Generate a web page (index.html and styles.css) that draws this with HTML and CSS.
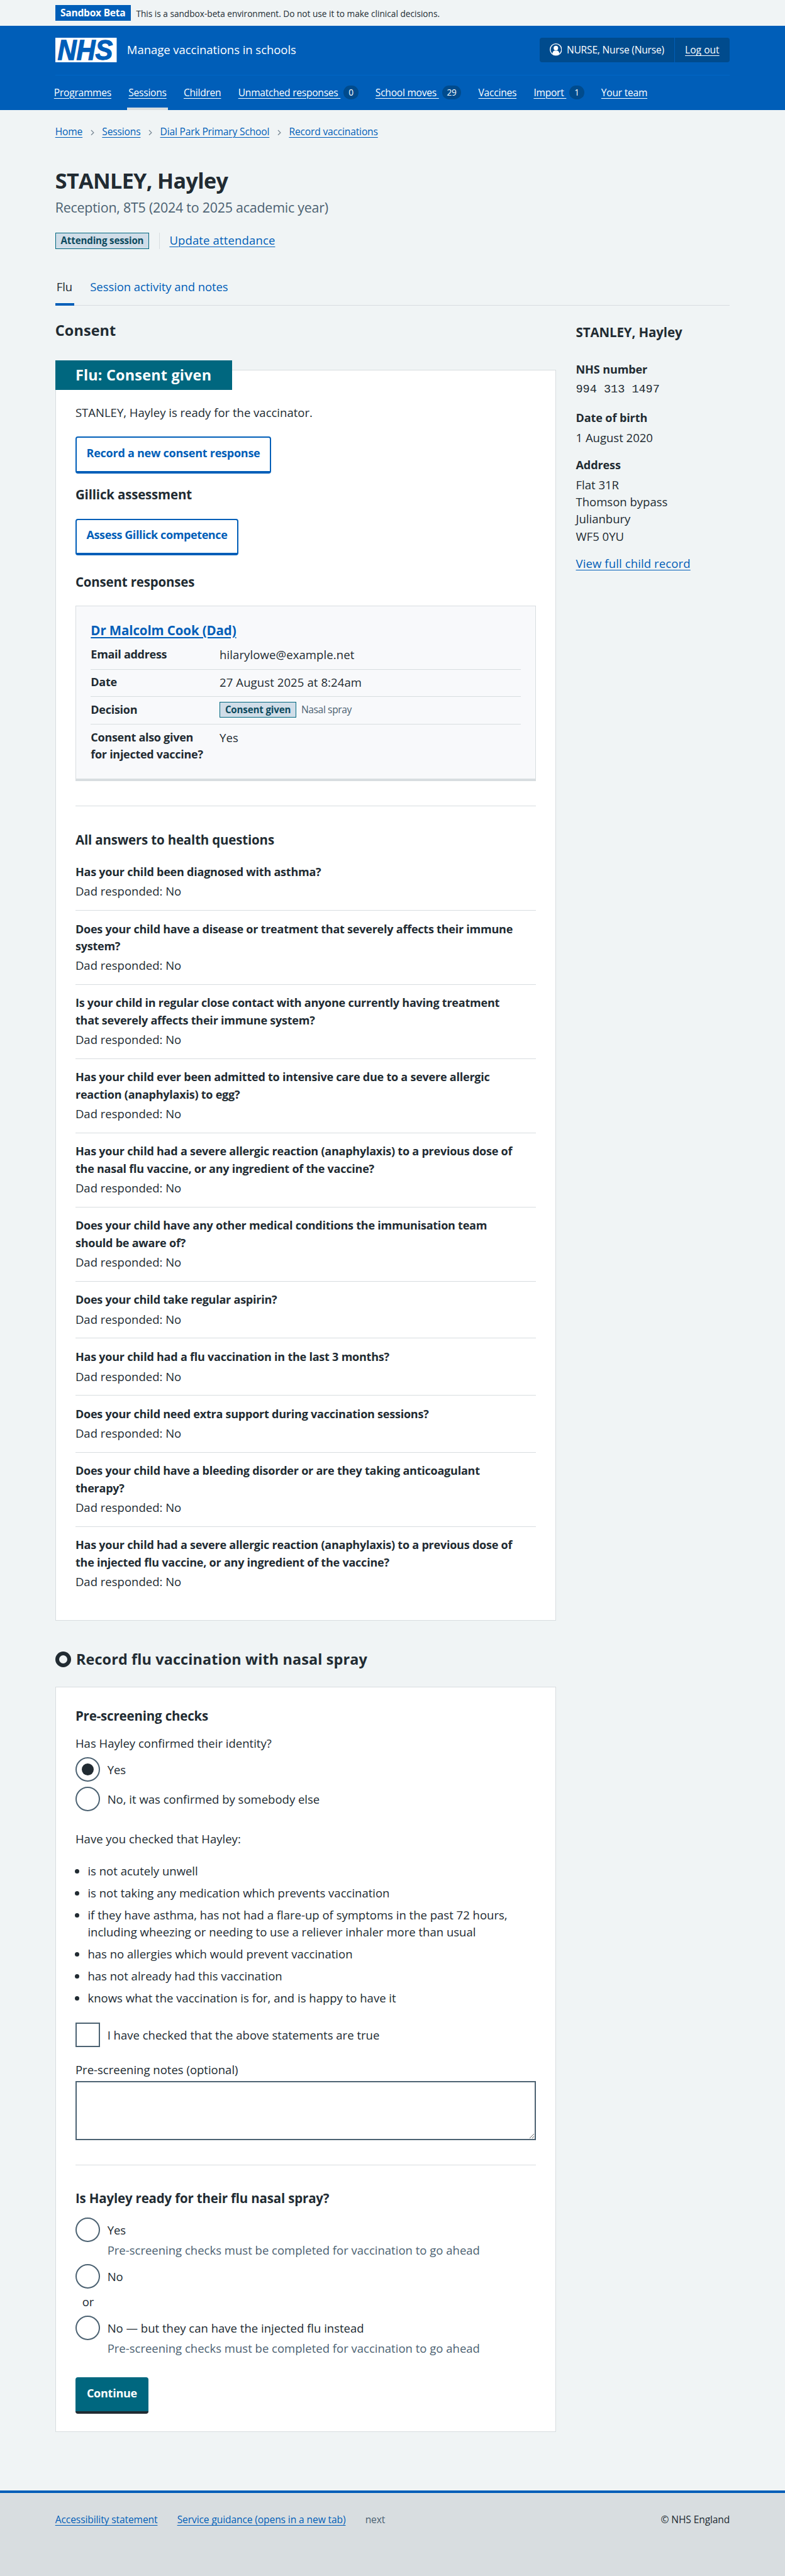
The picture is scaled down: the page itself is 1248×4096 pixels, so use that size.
FILE: index.html
```html
<!DOCTYPE html>
<html lang="en">
<head>
<meta charset="utf-8">
<title>STANLEY, Hayley – Manage vaccinations in schools</title>
<link rel="stylesheet" href="styles.css">
</head>
<body>
<div class="environment">
  <div class="container environment-inner">
    <strong class="environment-tag">Sandbox Beta</strong>
    <span class="environment-text">This is a sandbox-beta environment. Do not use it to make clinical decisions.</span>
  </div>
</div>

<header class="header">
  <div class="container">
    <div class="header-top">
      <svg class="logo" viewBox="0 0 100 40" role="img" aria-label="NHS">
        <rect width="100" height="40" fill="#fff"/>
        <text class="logo-text" x="3.5" y="36" textLength="90" lengthAdjust="spacingAndGlyphs">NHS</text>
      </svg>
      <span class="service-name">Manage vaccinations in schools</span>
      <div class="account">
        <span class="account-user">
          <svg class="account-icon" viewBox="0 0 20 20" aria-hidden="true">
            <circle cx="10" cy="10" r="9.3" fill="none" stroke="#fff" stroke-width="1.4"/>
            <circle cx="10" cy="7.6" r="3.7" fill="#fff"/>
            <path d="M4.4 16.6c0-3.4 1.8-4.9 4-4.9h3.200c2.200 0 4 1.500 4 4.900C14 18.300 12.100 19 10 19s-4-.7-5.600-2.400z" fill="#fff"/>
          </svg>
          <span class="account-name">NURSE, Nurse (Nurse)</span>
        </span>
        <a class="account-logout" href="#">Log out</a>
      </div>
    </div>
    <nav class="nav">
      <a class="nav-item" href="#"><u>Programmes</u></a>
      <a class="nav-item nav-item-active" href="#"><u>Sessions</u></a>
      <a class="nav-item" href="#"><u>Children</u></a>
      <a class="nav-item" href="#"><u>Unmatched responses&nbsp;</u><span class="count">0</span></a>
      <a class="nav-item" href="#"><u>School moves&nbsp;</u><span class="count">29</span></a>
      <a class="nav-item" href="#"><u>Vaccines</u></a>
      <a class="nav-item" href="#"><u>Import&nbsp;</u><span class="count">1</span></a>
      <a class="nav-item" href="#"><u>Your team</u></a>
    </nav>
  </div>
</header>

<div class="container main">
  <nav class="breadcrumb">
    <a href="#">Home</a>
    <svg class="chevron" viewBox="0 0 6 10"><path d="M1 1l4 4-4 4"/></svg>
    <a href="#">Sessions</a>
    <svg class="chevron" viewBox="0 0 6 10"><path d="M1 1l4 4-4 4"/></svg>
    <a href="#">Dial Park Primary School</a>
    <svg class="chevron" viewBox="0 0 6 10"><path d="M1 1l4 4-4 4"/></svg>
    <a href="#">Record vaccinations</a>
  </nav>

  <h1 class="title">STANLEY, Hayley</h1>
  <p class="caption">Reception, 8T5 (2024 to 2025 academic year)</p>

  <div class="status-bar">
    <strong class="tag">Attending session</strong>
    <span class="status-action"><a href="#">Update attendance</a></span>
  </div>

  <nav class="tabs">
    <a class="tab tab-active" href="#">Flu</a>
    <a class="tab tab-link" href="#">Session activity and notes</a>
  </nav>

  <div class="columns">
    <main class="primary">
      <h2 class="section-heading">Consent</h2>
      <section class="card consent-card">
        <h2 class="card-label">Flu: Consent given</h2>
        <p class="lead">STANLEY, Hayley is ready for the vaccinator.</p>
        <a class="button button-outline" href="#">Record a new consent response</a>
        <h3 class="subheading after-button">Gillick assessment</h3>
        <a class="button button-outline button-gillick" href="#">Assess Gillick competence</a>
        <h3 class="subheading before-response">Consent responses</h3>

        <div class="response">
          <h4 class="response-name"><a href="#">Dr Malcolm Cook (Dad)</a></h4>
          <dl class="summary">
            <div class="summary-row"><dt>Email address</dt><dd>hilarylowe@example.net</dd></div>
            <div class="summary-row"><dt>Date</dt><dd>27 August 2025 at 8:24am</dd></div>
            <div class="summary-row"><dt>Decision</dt><dd class="decision"><strong class="tag">Consent given</strong><span class="method">Nasal spray</span></dd></div>
            <div class="summary-row"><dt>Consent also given<br>for injected vaccine?</dt><dd>Yes</dd></div>
          </dl>
        </div>

        <hr class="rule">
        <h3 class="subheading after-rule">All answers to health questions</h3>
        <dl class="answers">
          <div class="answer"><dt>Has your child been diagnosed with asthma?</dt><dd>Dad responded: No</dd></div>
          <div class="answer"><dt>Does your child have a disease or treatment that severely affects their immune<br>system?</dt><dd>Dad responded: No</dd></div>
          <div class="answer"><dt>Is your child in regular close contact with anyone currently having treatment<br>that severely affects their immune system?</dt><dd>Dad responded: No</dd></div>
          <div class="answer"><dt>Has your child ever been admitted to intensive care due to a severe allergic<br>reaction (anaphylaxis) to egg?</dt><dd>Dad responded: No</dd></div>
          <div class="answer"><dt>Has your child had a severe allergic reaction (anaphylaxis) to a previous dose of<br>the nasal flu vaccine, or any ingredient of the vaccine?</dt><dd>Dad responded: No</dd></div>
          <div class="answer"><dt>Does your child have any other medical conditions the immunisation team<br>should be aware of?</dt><dd>Dad responded: No</dd></div>
          <div class="answer"><dt>Does your child take regular aspirin?</dt><dd>Dad responded: No</dd></div>
          <div class="answer"><dt>Has your child had a flu vaccination in the last 3 months?</dt><dd>Dad responded: No</dd></div>
          <div class="answer"><dt>Does your child need extra support during vaccination sessions?</dt><dd>Dad responded: No</dd></div>
          <div class="answer"><dt>Does your child have a bleeding disorder or are they taking anticoagulant<br>therapy?</dt><dd>Dad responded: No</dd></div>
          <div class="answer"><dt>Has your child had a severe allergic reaction (anaphylaxis) to a previous dose of<br>the injected flu vaccine, or any ingredient of the vaccine?</dt><dd>Dad responded: No</dd></div>
        </dl>
      </section>

      <h2 class="section-heading record-heading"><span class="ring"></span>Record flu vaccination with nasal spray</h2>
      <section class="card record-card">
        <h3 class="subheading">Pre-screening checks</h3>
        <p class="question">Has Hayley confirmed their identity?</p>
        <label class="choice"><span class="radio radio-checked"></span>Yes</label>
        <label class="choice choice-next"><span class="radio"></span>No, it was confirmed by somebody else</label>
        <p class="checked-intro">Have you checked that Hayley:</p>
        <ul class="checks">
          <li>is not acutely unwell</li>
          <li>is not taking any medication which prevents vaccination</li>
          <li>if they have asthma, has not had a flare-up of symptoms in the past 72 hours,<br>including wheezing or needing to use a reliever inhaler more than usual</li>
          <li>has no allergies which would prevent vaccination</li>
          <li>has not already had this vaccination</li>
          <li>knows what the vaccination is for, and is happy to have it</li>
        </ul>
        <label class="choice choice-confirm"><span class="checkbox"></span>I have checked that the above statements are true</label>
        <label class="notes-label" for="notes">Pre-screening notes (optional)</label>
        <textarea class="notes" id="notes"></textarea>
        <hr class="rule">
        <h3 class="subheading after-rule">Is Hayley ready for their flu nasal spray?</h3>
        <label class="choice choice-first"><span class="radio"></span>Yes</label>
        <p class="hint">Pre-screening checks must be completed for vaccination to go ahead</p>
        <label class="choice"><span class="radio"></span>No</label>
        <p class="or">or</p>
        <label class="choice"><span class="radio"></span>No — but they can have the injected flu instead</label>
        <p class="hint">Pre-screening checks must be completed for vaccination to go ahead</p>
        <a class="button button-primary" href="#">Continue</a>
      </section>
    </main>

    <aside class="sidebar">
      <h2 class="sidebar-heading">STANLEY, Hayley</h2>
      <dl class="details">
        <dt>NHS number</dt><dd class="nhs-number">994 313 1497</dd>
        <dt>Date of birth</dt><dd>1 August 2020</dd>
        <dt>Address</dt><dd>Flat 31R<br>Thomson bypass<br>Julianbury<br>WF5 0YU</dd>
      </dl>
      <a class="record-link" href="#">View full child record</a>
    </aside>
  </div>
</div>

<footer class="footer">
  <div class="container footer-inner">
    <a href="#">Accessibility statement</a>
    <a href="#">Service guidance (opens in a new tab)</a>
    <span class="footer-build">next</span>
    <span class="copyright">© NHS England</span>
  </div>
</footer>
</body>
</html>
```
FILE: styles.css
```css
* { box-sizing: border-box; }

html { background: #d8dde0; overflow: hidden; }

body {
  zoom: 0.975;
  margin: 0;
  background: #f0f4f5;
  color: #212b32;
  font: 460 19px/28px "Open Sans", "Noto Sans", sans-serif;
}

h1, h2, h3, h4, p, dl, dd, ul { margin: 0; padding: 0; }

a { color: #005eb8; text-decoration-thickness: 1px; text-underline-offset: 3px; }

.container { width: 1100px; margin: 0 auto; }

/* Environment banner */
.environment-inner { display: flex; align-items: center; height: 42px; gap: 9px; font-size: 14px; }
.environment-tag { height: 26px; width: 123px; text-align: center; line-height: 26px; font-size: 16px; letter-spacing: -0.25px; background: #005eb8; color: #fff; white-space: nowrap; }
.environment-text { padding-top: 2px; white-space: nowrap; }

/* Header */
.header { height: 137px; background: #005eb8; color: #fff; }
.header a { color: #fff; }
.header-top { display: flex; align-items: center; height: 81px; padding: 20px 0; border-bottom: 1px solid #0066c6; }
.logo { width: 100px; height: 40px; overflow: visible; }
.logo-text { font: italic bold 45px "Liberation Sans", Arial, sans-serif; fill: #005eb8; stroke: #005eb8; stroke-width: 1.3px; }
.service-name { margin: -2px auto 0 17px; letter-spacing: -0.05px; }
.account { display: flex; width: 310px; height: 40px; background: #004b8d; border-radius: 4px; font-size: 16px; line-height: 40px; }
.account-user { display: flex; align-items: center; width: 220px; padding-left: 16px; border-right: 1px solid #005eb8; }
.account-icon { width: 20px; height: 20px; margin: -2px 8px 0 0; }
.account-name { letter-spacing: -0.2px; white-space: nowrap; }
.account-logout { flex: 1; text-align: center; }
.nav { display: flex; gap: 24px; height: 56px; margin-left: -4px; font-size: 16px; letter-spacing: -0.26px; }
.nav-item { display: flex; align-items: center; padding: 0 2px; border-bottom: 4.15px solid transparent; border-top: 4.15px solid transparent; text-decoration: none; white-space: nowrap; }
.nav-item u { text-decoration-thickness: 1px; text-underline-offset: 3px; }
.nav-item-active { border-bottom-color: #d8dde0; }
.count { min-width: 24px; height: 22px; margin-left: 5px; padding: 0 8px; border-radius: 11px; background: #004b8d; font-size: 14px; line-height: 23px; text-align: center; }

/* Page heading */
.main { height: 3883px; padding-top: 24px; }
.breadcrumb { display: flex; align-items: center; height: 24px; font-size: 16px; line-height: 24px; letter-spacing: -0.18px; }
.chevron { width: 6px; height: 10px; margin: 2px 13px 0; fill: none; stroke: #768692; stroke-width: 1.3; }
.title { margin-top: 45.4px; font-size: 35px; line-height: 44px; letter-spacing: -0.65px; }
.caption { margin-top: 6px; font-size: 22px; line-height: 32px; letter-spacing: -0.25px; color: #4c6272; }
.status-bar { display: flex; height: 26px; margin-top: 25.6px; }
.tag { display: inline-block; height: 26px; padding: 0 8px; border: 1px solid #00677f; background: #d0dde8; color: #0d4a5e; font-size: 15.5px; line-height: 24px; letter-spacing: -0.15px; white-space: nowrap; }
.status-action { margin-left: 16px; padding-left: 16px; border-left: 1px solid #d8dde0; line-height: 24px; letter-spacing: 0.14px; }
.tabs { display: flex; height: 60px; margin-top: 33px; border-bottom: 1px solid #d8dde0; letter-spacing: -0.08px; }
.tab { height: 60px; padding: 14px 2px 0; text-decoration: none; }
.tab-active { width: 31px; color: #212b32; border-bottom: 4.15px solid #005eb8; }
.tab-link { margin-left: 24px; }

/* Two-column body */
.columns { display: grid; grid-template-columns: 817px 1fr; column-gap: 32px; }
.section-heading { margin-top: 23.7px; font-size: 24px; line-height: 32px; letter-spacing: 0.13px; }
.card { padding: 0 32px; border: 1px solid #d8dde0; background: #fff; }
.consent-card { height: 2040px; margin-top: 48.300px; }
.card-label { width: 288px; height: 48px; margin: -16px 0 0 -33px; padding-left: 33px; background: #00677f; color: #fff; font-size: 24px; line-height: 48px; letter-spacing: 0.2px; white-space: nowrap; }
.lead { margin: 22.6px 0 25.4px; }
.subheading { font-size: 21px; line-height: 28px; letter-spacing: -0.17px; }
.after-button { margin: 21px 0 25px; }
.before-response { margin: 29px 0 25px; }
.after-rule { margin-top: 40.9px; }
.button { display: table; height: 60px; padding: 11px 16px 0; border-radius: 4px; font-size: 18.5px; font-weight: 700; letter-spacing: -0.26px; line-height: 28px; text-decoration: none; white-space: nowrap; }
.button-outline { border: 2.1px solid #005eb8; border-bottom-width: 4.15px; background: #fff; }
.button-gillick { letter-spacing: -0.42px; }
.button-primary { width: 119px; margin-top: 33.400px; padding: 13px 0 0; border-bottom: 4.15px solid #212b32; background: #00677f; color: #fff; text-align: center; }

/* Consent response */
.response { height: 286px; padding: 25px 24px 0; border: 1px solid #d8dde0; border-bottom: 4.15px solid #d8dde0; background: #f8f9fb; }
.response-name { font-size: 21px; line-height: 28px; letter-spacing: -0.1px; }
.response-name a { text-decoration-thickness: 2px; }
.summary { margin-top: 5px; }
.summary-row { display: flex; min-height: 45px; padding-top: 6.5px; border-bottom: 1px solid #d8dde0; }
.summary-row:last-child { border-bottom: 0; }
.summary dt { width: 210px; font-size: 18.5px; font-weight: 700; letter-spacing: -0.3px; }
.summary dd { letter-spacing: 0.1px; }
.summary .decision { display: flex; padding-top: 1px; letter-spacing: 0; }
.method { margin-left: 8px; color: #4c6272; font-size: 16px; line-height: 26px; letter-spacing: -0.4px; }
.rule { height: 1px; margin: 40px 0 0; border: 0; background: #d8dde0; }

/* Health answers */
.answers { margin-top: 8.300px; }
.answer { padding: 16px 0 16.600px; border-bottom: 1px solid #d8dde0; }
.answer:last-child { border-bottom: 0; }
.answer dt { font-size: 18.5px; font-weight: 700; letter-spacing: -0.24px; white-space: nowrap; }
.answer dd { margin-top: 3.400px; }

/* Recording form */
.record-heading { display: flex; align-items: center; margin-top: 47.300px; }
.ring { width: 26px; height: 26px; margin-right: 8px; border: 6.2px solid #212b32; border-radius: 50%; }
.record-card { height: 1215px; margin-top: 28.700px; padding-top: 32.900px; }
.question { margin: 15.700px 0 9.400px; }
.choice { display: flex; align-items: center; height: 40px; }
.choice-next { margin-top: 8px; }
.choice-confirm { margin-top: 26px; }
.choice-first { margin-top: 17px; }
.radio, .checkbox { display: flex; flex: none; width: 40px; height: 40px; margin-right: 12px; border: 2.1px solid #4c6272; background: #fff; }
.radio { border-radius: 50%; }
.radio-checked::before { content: ""; width: 20px; height: 20px; margin: auto; border-radius: 50%; background: #212b32; }
.checked-intro { margin-top: 30.600px; }
.checks { margin-top: 24px; padding-left: 20px; }
.checks li { margin-bottom: 8px; white-space: nowrap; }
.checks li:last-child { margin-bottom: 0; }
.notes-label { display: block; margin-top: 22.600px; }
.notes { display: block; width: 751px; height: 96px; margin-top: 4.800px; border: 2.1px solid #4c6272; background: #fff; resize: vertical; }
.hint { margin: -1.400px 0 9.400px 52px; color: #4c6272; }
.or { margin: 6.600px 0 9.400px 11px; }

/* Child details */
.sidebar-heading { margin-top: 28.900px; font-size: 21px; line-height: 28px; letter-spacing: -0.1px; }
.details { margin-top: 32.400px; }
.details dt { font-size: 18.5px; font-weight: 700; letter-spacing: -0.1px; }
.details dd { margin: 4px 0 16.500px; }
.details .nhs-number { padding-top: 1.500px; font: 19px/29.500px "Liberation Mono", monospace; }
.details dd:last-child { margin-bottom: 0; }
.record-link { display: block; margin-top: 17px; letter-spacing: 0.12px; }

/* Footer */
.footer { height: 140px; border-top: 4.15px solid #005eb8; background: #d8dde0; }
.footer-inner { display: flex; padding-top: 31.800px; gap: 32px; font-size: 16px; line-height: 24px; letter-spacing: -0.12px; }
.footer-build { color: #4c6272; }
.copyright { margin-left: auto; }
```
